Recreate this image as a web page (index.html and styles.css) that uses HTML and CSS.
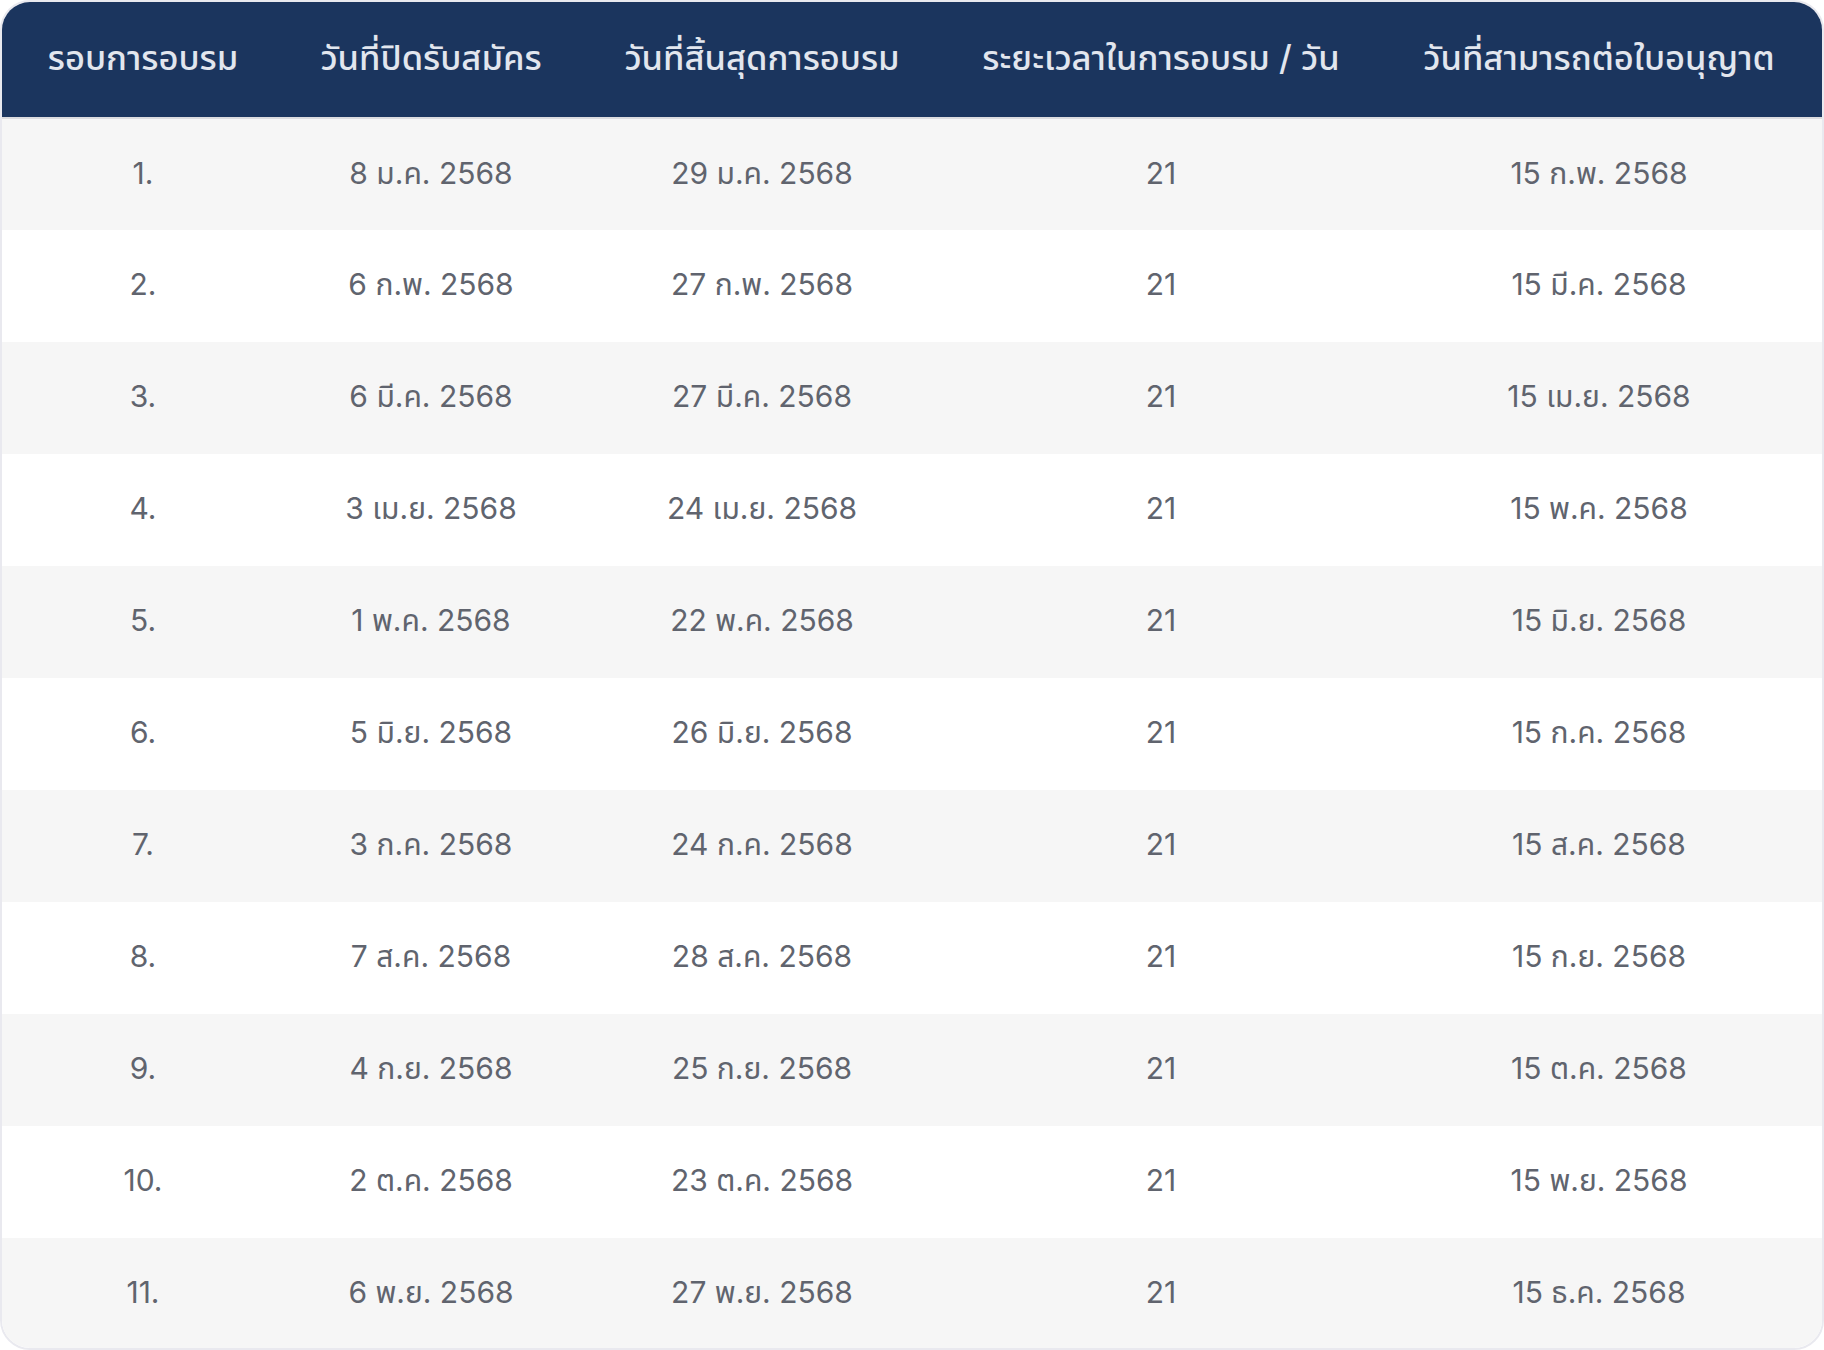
FILE: index.html
```html
<!DOCTYPE html>
<html lang="th">
<head>
<meta charset="utf-8">
<title>ตารางรอบการอบรม</title>
<link rel="stylesheet" href="styles.css">
</head>
<body>
<div class="card">
  <table class="schedule">
    <colgroup>
      <col class="c1"><col class="c2"><col class="c3"><col class="c4"><col class="c5">
    </colgroup>
    <thead>
      <tr>
        <th>รอบการอบรม</th>
        <th>วันที่ปิดรับสมัคร</th>
        <th>วันที่สิ้นสุดการอบรม</th>
        <th>ระยะเวลาในการอบรม / วัน</th>
        <th>วันที่สามารถต่อใบอนุญาต</th>
      </tr>
    </thead>
    <tbody>
      <tr><td>1.</td><td>8 ม.ค. 2568</td><td>29 ม.ค. 2568</td><td>21</td><td>15 ก.พ. 2568</td></tr>
      <tr><td>2.</td><td>6 ก.พ. 2568</td><td>27 ก.พ. 2568</td><td>21</td><td>15 มี.ค. 2568</td></tr>
      <tr><td>3.</td><td>6 มี.ค. 2568</td><td>27 มี.ค. 2568</td><td>21</td><td>15 เม.ย. 2568</td></tr>
      <tr><td>4.</td><td>3 เม.ย. 2568</td><td>24 เม.ย. 2568</td><td>21</td><td>15 พ.ค. 2568</td></tr>
      <tr><td>5.</td><td>1 พ.ค. 2568</td><td>22 พ.ค. 2568</td><td>21</td><td>15 มิ.ย. 2568</td></tr>
      <tr><td>6.</td><td>5 มิ.ย. 2568</td><td>26 มิ.ย. 2568</td><td>21</td><td>15 ก.ค. 2568</td></tr>
      <tr><td>7.</td><td>3 ก.ค. 2568</td><td>24 ก.ค. 2568</td><td>21</td><td>15 ส.ค. 2568</td></tr>
      <tr><td>8.</td><td>7 ส.ค. 2568</td><td>28 ส.ค. 2568</td><td>21</td><td>15 ก.ย. 2568</td></tr>
      <tr><td>9.</td><td>4 ก.ย. 2568</td><td>25 ก.ย. 2568</td><td>21</td><td>15 ต.ค. 2568</td></tr>
      <tr><td>10.</td><td>2 ต.ค. 2568</td><td>23 ต.ค. 2568</td><td>21</td><td>15 พ.ย. 2568</td></tr>
      <tr><td>11.</td><td>6 พ.ย. 2568</td><td>27 พ.ย. 2568</td><td>21</td><td>15 ธ.ค. 2568</td></tr>
    </tbody>
  </table>
</div>
</body>
</html>
```
FILE: styles.css
```css
html, body {
  margin: 0;
  padding: 0;
  background: #ffffff;
}

body {
  font-family: "Inter", "Noto Sans Thai", "Noto Sans", "DejaVu Sans", sans-serif;
}

.card {
  box-sizing: border-box;
  width: 1824px;
  height: 1350px;
  border: 2px solid #e9e9ef;
  border-radius: 30px;
  overflow: hidden;
  background: #ffffff;
}

.schedule {
  width: 1820px;
  table-layout: fixed;
  border-collapse: collapse;
  border-spacing: 0;
}

.c1 { width: 282px; }
.c2 { width: 294px; }
.c3 { width: 368px; }
.c4 { width: 430px; }
.c5 { width: 446px; }

.schedule thead tr {
  height: 116px;
  background: #1b355e;
  border-bottom: 2px solid #dcdcdf;
}

.schedule th {
  padding: 0 0 4px;
  font-size: 34.5px;
  line-height: 44px;
  font-weight: 500;
  color: #e2e6ee;
  text-align: center;
  vertical-align: middle;
  white-space: nowrap;
}

.schedule tbody tr {
  height: 112px;
}

.schedule td {
  padding: 0 0 4px;
  font-size: 30px;
  line-height: 40px;
  font-weight: 400;
  color: #60646e;
  text-align: center;
  vertical-align: middle;
  white-space: nowrap;
}

.schedule tbody tr:nth-child(odd) {
  background: #f6f6f6;
}

.schedule tbody tr:nth-child(even) {
  background: #ffffff;
}
```
